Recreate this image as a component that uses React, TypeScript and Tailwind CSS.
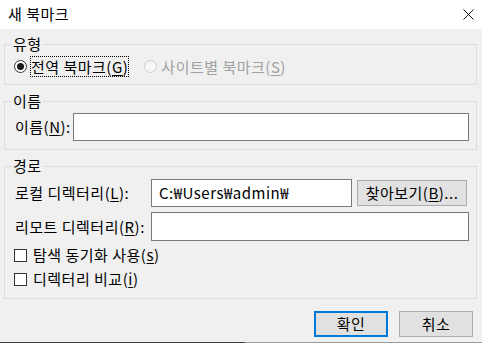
import type { ReactNode } from "react";

function Group({ label, className, children }: { label: string; className?: string; children: ReactNode }) {
  return (
    <div className={`relative border border-[#dcdcdc] ${className || ""}`}>
      <span className="absolute -top-[10px] left-[7px] px-[1px] bg-[#f0f0f0] leading-[18px]">{label}</span>
      {children}
    </div>
  );
}

function Mn({ children }: { children: ReactNode }) {
  return <span className="underline underline-offset-[2px] decoration-1">{children}</span>;
}

function Checkbox({ children }: { children: ReactNode }) {
  return (
    <div className="flex items-center h-[20px] pl-[9px] mt-[4px]">
      <span className="w-[13px] h-[13px] border border-[#333] bg-white shrink-0" />
      <span className="ml-[6px] leading-[18px]">{children}</span>
    </div>
  );
}

export default function App() {
  return (
    <div className="w-[482px] h-[343px] bg-[#f0f0f0] text-[15px] tracking-[0.5px] text-black font-['Noto_Sans_CJK_KR','Noto_Sans',sans-serif] flex flex-col overflow-hidden">
      {/* title bar */}
      <div className="h-[29px] bg-white flex items-center justify-between pl-[8px] pr-[8px] shrink-0">
        <span className="leading-[18px] pb-[1px]">새 북마크</span>
        <svg width="11" height="11" viewBox="0 0 11 11" className="mb-[1px]">
          <path d="M0.5 0.5 L10.5 10.5 M10.5 0.5 L0.5 10.5" stroke="#111" strokeWidth="1" />
        </svg>
      </div>

      <div className="pl-[4px] pr-[5px] flex flex-col">
        <Group label="유형" className="mt-[15px] h-[41px]">
          <div className="flex items-center h-[21px] pl-[9px] mt-[11px]">
            <span className="w-[13px] h-[13px] rounded-full border border-[#333] bg-white flex items-center justify-center shrink-0">
              <span className="w-[7px] h-[7px] rounded-full bg-[#1a1a1a]" />
            </span>
            <span className="ml-[3px] px-[1px] h-[21px] flex items-center outline-1 outline-dotted outline-black -outline-offset-1 leading-[18px]">
              전역 북마크(<Mn>G</Mn>)
            </span>
            <span className="ml-[15px] w-[13px] h-[13px] rounded-full border border-[#cccccc] bg-[#f6f6f6] shrink-0" />
            <span className="ml-[4px] text-[#a0a0a0] leading-[18px]">
              사이트별 북마크(<Mn>S</Mn>)
            </span>
          </div>
        </Group>

        <Group label="이름" className="mt-[16px] h-[49px]">
          <div className="flex items-center h-[28px] mt-[11px]">
            <span className="w-[68px] pl-[10px] leading-[18px] shrink-0">
              이름(<Mn>N</Mn>):
            </span>
            <div className="w-[396px] h-[28px] border border-[#7a7a7a] bg-white" />
          </div>
        </Group>

        <Group label="경로" className="mt-[16px] h-[133px]">
          <div className="flex items-center h-[28px] mt-[12px]">
            <span className="w-[146px] pl-[10px] leading-[18px] shrink-0">
              로컬 디렉터리(<Mn>L</Mn>):
            </span>
            <div className="w-[201px] h-[28px] border border-[#7a7a7a] bg-white flex items-center pl-[7px] leading-[18px]">
              C:₩Users₩admin₩
            </div>
            <button className="ml-[5px] w-[110px] h-[26px] border border-[#adadad] bg-[#e1e1e1] flex items-center justify-center leading-[18px]">
              찾아보기(<Mn>B</Mn>)...
            </button>
          </div>
          <div className="flex items-center h-[29px] mt-[5px]">
            <span className="w-[146px] pl-[10px] leading-[18px] shrink-0">
              리모트 디렉터리(<Mn>R</Mn>):
            </span>
            <div className="w-[318px] h-[29px] border border-[#7a7a7a] bg-white" />
          </div>
          <Checkbox>
            탐색 동기화 사용(<Mn>s</Mn>)
          </Checkbox>
          <Checkbox>
            디렉터리 비교(<Mn>i</Mn>)
          </Checkbox>
        </Group>
      </div>

      <div className="flex justify-end gap-[11px] mt-[12px] pr-[9px]">
        <button className="w-[74px] h-[26px] border-2 border-[#0078d7] bg-[#e1e1e1] flex items-center justify-center leading-[18px]">
          확인
        </button>
        <button className="w-[74px] h-[26px] border border-[#adadad] bg-[#e1e1e1] flex items-center justify-center leading-[18px]">
          취소
        </button>
      </div>

      <div className="mt-auto flex h-[1px] shrink-0">
        <div className="w-[245px] bg-[#3c3c3c]" />
        <div className="flex-1 bg-[#9a9a9a]" />
      </div>
    </div>
  );
}
